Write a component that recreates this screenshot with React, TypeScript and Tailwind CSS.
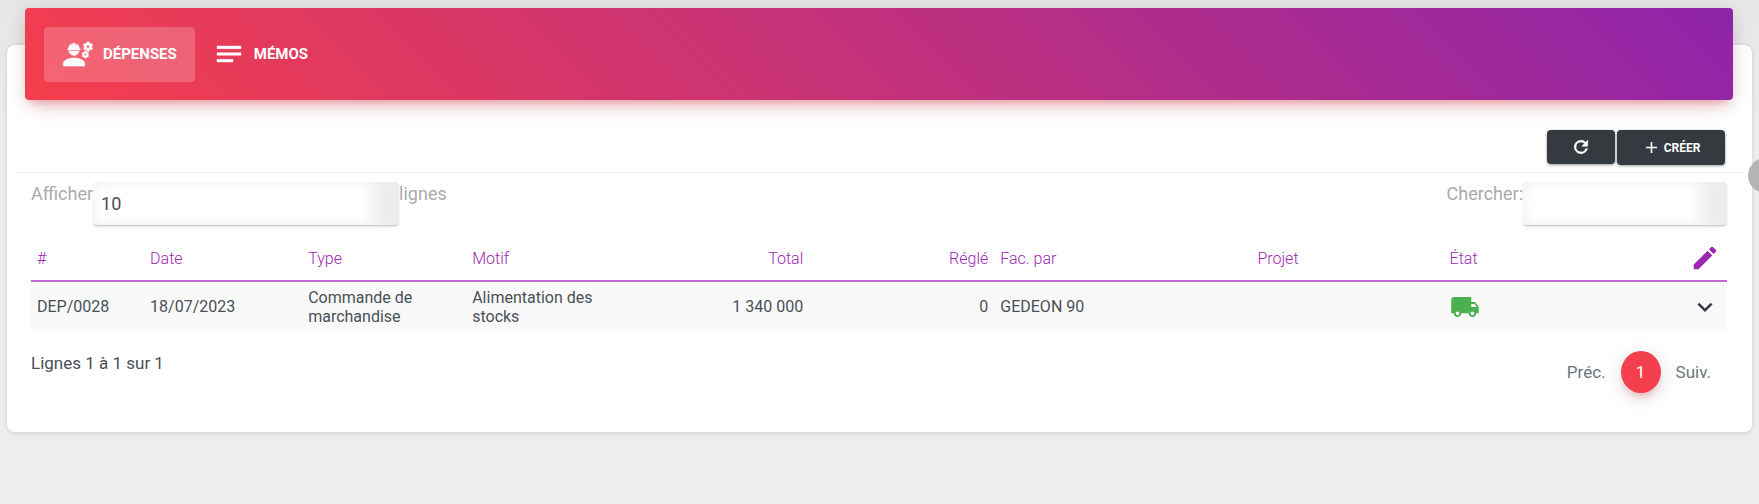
import React from "react";
import {
  MdEngineering,
  MdNotes,
  MdAdd,
  MdEdit,
  MdLocalShipping,
  MdExpandMore,
  MdSettings,
} from "react-icons/md";

const field =
  "h-11 rounded border-b border-[#cfcfcf] bg-[linear-gradient(to_left,#eaeae8_0,#ececea_14px,#ffffff_38px)] px-2 text-lg text-[#495057] shadow-[inset_0_0_14px_#efefef,0_1px_2px_#0000001f] outline-none";

const tab =
  "flex h-[55px] items-center gap-[9px] rounded px-[18px] text-[15px] font-bold text-white";

const darkButton =
  "flex items-center justify-center gap-[3px] rounded bg-[#343a40] text-xs font-bold text-white shadow-[0_1px_3px_#00000066]";

const columns = [
  { label: "#", cell: "DEP/0028", col: "w-[6.67%]", align: "text-left" },
  { label: "Date", cell: "18/07/2023", col: "w-[9.32%]", align: "text-left" },
  { label: "Type", cell: "Commande de marchandise", col: "w-[9.67%]", align: "text-left" },
  { label: "Motif", cell: "Alimentation des stocks", col: "w-[9.85%]", align: "text-left" },
  { label: "Total", cell: "1\u00a0340\u00a0000", col: "w-[10.38%]", align: "text-right" },
  { label: "Réglé", cell: "0", col: "w-[10.91%]", align: "text-right" },
  { label: "Fac. par", cell: "GEDEON 90", col: "w-[15.16%]", align: "text-left" },
  { label: "Projet", cell: "", col: "w-[11.33%]", align: "text-left" },
];

function RefreshIcon() {
  return (
    <svg viewBox="0 0 24 24" className="size-5" fill="currentColor" stroke="currentColor" strokeWidth="0.8">
      <path d="M17.65 6.35A7.96 7.96 0 0 0 12 4a8 8 0 1 0 7.73 10h-2.08A6 6 0 1 1 12 6c1.66 0 3.14.69 4.22 1.78L13 11h7V4l-2.35 2.35z" />
    </svg>
  );
}

export default function App() {
  return (
    <div className="relative min-h-screen overflow-hidden bg-[#ededed] bg-linear-to-b from-[#e6e6e6] via-[#ededed] via-30% to-[#ededed] px-[7px] pt-[45px] pb-[72px] font-[Roboto,sans-serif] text-[#495057]">
      <main className="flow-root rounded-lg bg-white px-2 pb-[39px] shadow-[0_1px_4px_#00000024]">
        <nav className="-mt-[37px] mr-[11px] ml-[10px] flex h-[92px] items-center rounded bg-[linear-gradient(45deg,#f53e4c,#8e24aa)] px-[19px] shadow-[0_12px_20px_-10px_#f43f4f47,0_4px_20px_#0000001f,0_7px_8px_-5px_#f43f4f59]">
          <a href="#depenses" className={`${tab} bg-white/20`}>
            <MdEngineering className="size-8 [&_path:not([fill=none])]:[stroke-width:0.5px]" />
            DÉPENSES
          </a>
          <a href="#memos" className={tab}>
            <MdNotes className="size-8 [&_path:not([fill=none])]:[stroke-width:0.3px]" />
            MÉMOS
          </a>
        </nav>
        <div className="mt-[30px] flex items-start justify-end gap-0.5 border-b border-[#eeeeee] pr-[19px] pb-[7px]">
          <button aria-label="Actualiser" className={`${darkButton} h-[34px] w-[68px]`}>
            <RefreshIcon />
          </button>
          <button className={`${darkButton} h-[35px] w-[108px]`}>
            <MdAdd className="size-[19px]" />
            CRÉER
          </button>
        </div>
        <div className="pr-[17px] pl-4">
          <div className="flex justify-between pt-[9px] text-lg text-[#aaaaaa]">
            <label className="flex items-start leading-6">
              Afficher
              <select className={`${field} w-[306px] appearance-none`} defaultValue="10">
                <option>10</option>
                <option>25</option>
              </select>
              lignes
            </label>
            <label className="flex items-start leading-6">
              Chercher:
              <input type="search" className={`${field} w-[204px]`} />
            </label>
          </div>
          <table className="mt-[10px] w-full table-fixed text-base leading-[19px]">
            <thead>
              <tr className="h-[45px] border-b-2 border-[#c067d0] text-[#9c27b0]">
                {columns.map((c) => (
                  <th key={c.label} className={`${c.col} ${c.align} px-1.5 font-light`}>
                    {c.label}
                  </th>
                ))}
                <th className="px-1.5 text-left font-light">État</th>
                <th className="w-[5%] px-[7px]">
                  <MdEdit className="ml-auto size-[30px]" />
                </th>
              </tr>
            </thead>
            <tbody>
              <tr className="h-[50px] bg-[#f9f9f9]">
                {columns.map((c) => (
                  <td key={c.label} className={`${c.align} px-1.5`}>
                    {c.cell}
                  </td>
                ))}
                <td className="px-1.5">
                  <MdLocalShipping className="size-[30px] text-[#4caf50]" />
                </td>
                <td className="px-[7px]">
                  <button aria-label="Actions" className="ml-auto block">
                    <MdExpandMore className="size-[30px] text-[#343a40]" />
                  </button>
                </td>
              </tr>
            </tbody>
          </table>
          <div className="flex items-start justify-between pt-5 text-[17px] leading-6">
            <p>Lignes 1 à 1 sur 1</p>
            <div className="flex items-center gap-[15px] pr-4 text-[#6c757d]">
              <button>Préc.</button>
              <button className="h-[42px] w-10 rounded-[50%] bg-[#f43f4f] text-white shadow-[0_4px_20px_#00000024,0_7px_10px_-5px_#f43f4f66]">1</button>
              <button>Suiv.</button>
            </div>
          </div>
        </div>
      </main>
      <button aria-label="Paramètres" className="absolute top-[158px] -right-6 flex size-[35px] items-center rounded-full bg-[#b4b4b4] pl-[9px] text-white">
        <MdSettings className="size-5" />
      </button>
    </div>
  );
}
